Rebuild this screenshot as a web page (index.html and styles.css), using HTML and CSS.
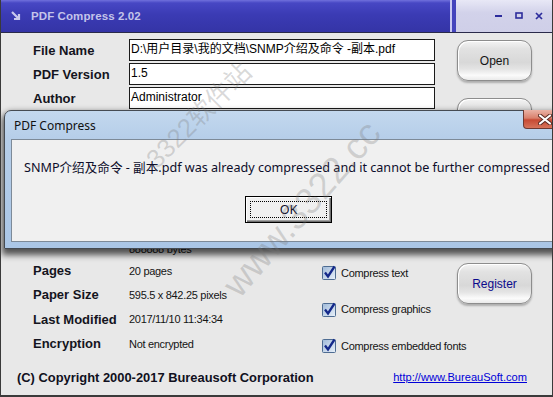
FILE: index.html
```html
<!DOCTYPE html>
<html>
<head>
<meta charset="utf-8">
<title>PDF Compress 2.02</title>
<link rel="stylesheet" href="styles.css">
</head>
<body>
<div class="window">
  <div class="titlebar">
    <div class="title-left">
      <svg class="app-icon" width="10" height="10" viewBox="0 0 10 10"><path d="M1 1 L8 8 M8 3 L8 8 L3 8" fill="none" stroke="#c8c8ec" stroke-width="2.2"/></svg>
      <span class="title-text">PDF Compress 2.02</span>
    </div>
    <div class="title-sep"></div>
    <div class="title-right">
      <svg width="8" height="8" viewBox="0 0 8 8"><rect x="0" y="3" width="7" height="2" fill="#2c2c9c"/></svg>
      <svg width="8" height="8" viewBox="0 0 8 8"><rect x="1" y="1" width="6" height="5" fill="none" stroke="#2c2c9c" stroke-width="1.6"/></svg>
      <svg width="8" height="8" viewBox="0 0 8 8"><path d="M1 1 L7 7 M7 1 L1 7" stroke="#2c2c9c" stroke-width="1.7"/></svg>
    </div>
  </div>
  <div class="client">
    <div class="top">
      <div class="fields">
        <div class="row"><span class="label">File Name</span><div class="field">D:\用户目录\我的文档\SNMP介绍及命令 -副本.pdf</div></div>
        <div class="row"><span class="label">PDF Version</span><div class="field">1.5</div></div>
        <div class="row"><span class="label">Author</span><div class="field">Administrator</div></div>
        <div class="row"><span class="label">Subject</span><div class="field"></div></div>
        <div class="row"><span class="label">Title</span><div class="field"></div></div>
        <div class="row"><span class="label">Keywords</span><div class="field"></div></div>
        <div class="row"><span class="label">Creator</span><div class="field"></div></div>
        <div class="row"><span class="label">Producer</span><div class="field"></div></div>
      </div>
      <div class="buttons">
        <div class="gbtn">Open</div>
        <div class="gbtn">Compress</div>
      </div>
    </div>
    <div class="bottom">
      <div class="info">
        <div class="irow size-row"><span class="label">File Size</span><span class="value">888888 bytes</span></div>
        <div class="irow"><span class="label">Pages</span><span class="value">20 pages</span></div>
        <div class="irow"><span class="label">Paper Size</span><span class="value">595.5 x 842.25 pixels</span></div>
        <div class="irow"><span class="label">Last Modified</span><span class="value">2017/11/10 11:34:34</span></div>
        <div class="irow"><span class="label">Encryption</span><span class="value">Not encrypted</span></div>
      </div>
      <div class="checks">
        <div class="check"><svg class="cb" width="15" height="15" viewBox="0 0 15 15"><defs><linearGradient id="cbg" x1="0" y1="0" x2="1" y2="1"><stop offset="0" stop-color="#9fb9d8"/><stop offset="1" stop-color="#e9f1fa"/></linearGradient></defs><rect x="0.5" y="1.5" width="13" height="13" rx="1" fill="url(#cbg)" stroke="#4e6c92"/><path d="M3 7.5 L6 11.5 L12.5 1.5" fill="none" stroke="#14288a" stroke-width="2.3"/></svg><span>Compress text</span></div>
        <div class="check"><svg class="cb" width="15" height="15" viewBox="0 0 15 15"><rect x="0.5" y="1.5" width="13" height="13" rx="1" fill="url(#cbg)" stroke="#4e6c92"/><path d="M3 7.5 L6 11.5 L12.5 1.5" fill="none" stroke="#14288a" stroke-width="2.3"/></svg><span>Compress graphics</span></div>
        <div class="check"><svg class="cb" width="15" height="15" viewBox="0 0 15 15"><rect x="0.5" y="1.5" width="13" height="13" rx="1" fill="url(#cbg)" stroke="#4e6c92"/><path d="M3 7.5 L6 11.5 L12.5 1.5" fill="none" stroke="#14288a" stroke-width="2.3"/></svg><span>Compress embedded fonts</span></div>
      </div>
      <div class="reg"><div class="gbtn register">Register</div></div>
    </div>
    <div class="footer">
      <span class="copyright">(C) Copyright 2000-2017 Bureausoft Corporation</span>
      <a class="link" href="#">http://www.BureauSoft.com</a>
    </div>
  </div>

  <div class="dialog">
    <div class="dlg-title">
      <span>PDF Compress</span>
      <div class="dlg-close"><svg width="14" height="11" viewBox="0 0 14 11"><path d="M2 1.5 L12 9.5 M12 1.5 L2 9.5" stroke="#5a2a22" stroke-width="4" stroke-linecap="round"/><path d="M2 1.5 L12 9.5 M12 1.5 L2 9.5" stroke="#ffffff" stroke-width="2.2" stroke-linecap="round"/></svg></div>
    </div>
    <div class="dlg-body">
      <p class="msg">SNMP介绍及命令 - 副本.pdf was already compressed and it cannot be further compressed</p>
      <div class="dlg-actions"><div class="okbtn"><span class="focus">OK</span></div></div>
    </div>
  </div>

  <div class="watermark wm1">www.3322.cc</div>
  <div class="watermark wm2">3322软件站</div>
</div>
</body>
</html>
```

FILE: styles.css
```css
* { box-sizing: border-box; }
html, body { margin: 0; padding: 0; }
body {
  width: 553px;
  height: 397px;
  overflow: hidden;
  background: #ffffff;
  font-family: "Liberation Sans", Arial, "Noto Sans CJK SC", sans-serif;
}
.window {
  position: relative;
  width: 553px;
  height: 397px;
  overflow: hidden;
  background: #e8e8e8;
  border-left: 1px solid #3a3a3a;
  border-right: 1px solid #3a3a3a;
  border-bottom: 2px solid #3a3a3a;
}
.titlebar {
  display: flex;
  height: 33px;
  border-bottom: 1px solid #2a2a4a;
}
.title-left {
  flex: 1;
  display: flex;
  align-items: center;
  gap: 10px;
  padding-left: 10px;
  background: linear-gradient(180deg, #7070dc 0px, #4747c4 3px, #3b3bb4 45%, #3434a6 100%);
}
.title-text {
  color: #c4c4ea;
  font-weight: bold;
  font-size: 11.5px;
  letter-spacing: 0.1px;
}
.title-sep {
  width: 6px;
  background: linear-gradient(90deg, #c8c8f2 0 2px, #4444bc 2px 6px);
}
.title-right {
  width: 96px;
  display: flex;
  align-items: center;
  justify-content: flex-end;
  gap: 12px;
  padding-right: 9px;
  background: linear-gradient(180deg, #e8e8f6 0%, #d2d2ea 40%, #cfcfe8 100%);
}
.client {
  padding: 6px 20px 0 32px;
}
.top {
  display: flex;
  align-items: flex-start;
}
.fields {
  display: flex;
  flex-direction: column;
  gap: 2px;
}
.row {
  display: flex;
  align-items: center;
  height: 22px;
}
.label {
  width: 96px;
  flex: none;
  font-weight: bold;
  font-size: 13px;
  color: #141420;
}
.field {
  width: 306px;
  height: 22px;
  background: #ffffff;
  border: 1px solid #1a1a1a;
  font-size: 12px;
  line-height: 19px;
  padding-left: 1px;
  color: #000;
  white-space: nowrap;
  font-family: "Liberation Sans", Arial, "Noto Sans CJK SC", sans-serif;
}
.buttons {
  margin-left: 22px;
  display: flex;
  flex-direction: column;
  gap: 17px;
  padding-top: 1px;
}
.gbtn {
  width: 75px;
  height: 41px;
  border-radius: 11px;
  border: 1px solid #8d8d8d;
  background: linear-gradient(180deg, #f4f4f4 0%, #e2e2e2 20%, #d8d8d8 55%, #e4e4e4 72%, #fbfbfb 88%, #eaeaea 100%);
  box-shadow: inset 1px 1px 0 #ffffff, 0 2px 2px rgba(0,0,0,0.25);
  display: flex;
  align-items: center;
  justify-content: center;
  font-size: 12px;
  color: #151515;
}
.register { color: #0a0a8c; }
.bottom {
  display: flex;
  align-items: flex-start;
  margin-top: 5px;
}
.info {
  width: 289px;
  flex: none;
  display: flex;
  flex-direction: column;
}
.irow {
  display: flex;
  align-items: center;
  height: 24.4px;
}
.size-row .label { align-self: flex-start; }
.size-row .value { align-self: flex-end; margin-bottom: 3px; }
.value {
  font-size: 11px;
  color: #141414;
  letter-spacing: -0.3px;
}
.checks {
  width: 135px;
  flex: none;
  display: flex;
  flex-direction: column;
  gap: 21.5px;
  padding-top: 31px;
}
.check {
  display: flex;
  align-items: center;
  gap: 4px;
  height: 15px;
  font-size: 11px;
  letter-spacing: -0.3px;
  color: #141414;
  white-space: nowrap;
}
.cb { flex: none; }
.reg {
  padding-top: 29px;
}
.footer {
  display: flex;
  justify-content: space-between;
  align-items: center;
  margin-left: -16px;
  margin-right: 5px;
  margin-top: 14px;
}
.copyright {
  font-weight: bold;
  font-size: 12.9px;
  color: #101020;
}
.link {
  font-size: 11.1px;
  color: #0000d8;
  text-decoration: underline;
}
/* message dialog overlay */
.dialog {
  position: absolute;
  left: 3px;
  top: 110px;
  width: 570px;
  height: 139px;
  border: 1px solid #454b52;
  border-radius: 7px 7px 0 0;
  background: linear-gradient(180deg, #c3d8ee 0%, #b6cee9 20%, #aac6e6 100%);
  box-shadow: 0 4px 6px 2px rgba(0,0,0,0.65);
  padding: 0 6px 6px 6px;
  display: flex;
  flex-direction: column;
}
.dlg-title {
  height: 28px;
  display: flex;
  align-items: center;
  padding-left: 3px;
  font-family: "Noto Sans", "Open Sans", sans-serif;
  font-size: 12px;
  color: #111;
  position: relative;
}
.dlg-close {
  position: absolute;
  left: 512px;
  top: -1px;
  width: 44px;
  height: 19px;
  border: 1px solid #6e3a32;
  border-top: none;
  border-radius: 0 0 4px 4px;
  background: linear-gradient(180deg, #eab3a6 0%, #d9806c 45%, #c74a33 55%, #d6735a 100%);
  display: flex;
  align-items: center;
  padding-left: 14px;
}
.dlg-body {
  flex: 1;
  background: #f0f0f0;
  border: 1px solid #7d8a98;
  padding: 17px 0 0 12px;
}
.msg {
  margin: 0;
  font-family: "Noto Sans", "Open Sans", "Noto Sans CJK SC", sans-serif;
  font-size: 12.6px;
  color: #0d0d2a;
  white-space: nowrap;
}
.dlg-actions {
  margin-top: 20px;
  padding-left: 221px;
}
.okbtn {
  width: 87px;
  height: 27px;
  border: 1px solid #000;
  box-shadow: inset 1px 1px 0 #ffffff, inset -1px -1px 0 #6f6f6f, inset -2px -2px 0 #a0a0a0;
  background: #f0f0f0;
  padding: 4px;
}
.focus {
  display: flex;
  align-items: center;
  justify-content: center;
  height: 100%;
  border: 1px dotted #000;
  font-family: "Noto Sans", "Open Sans", sans-serif;
  font-size: 12.6px;
  color: #0d0d2a;
}
.watermark {
  position: absolute;
  white-space: nowrap;
  color: rgba(120, 120, 120, 0.28);
  font-family: "Liberation Sans", Arial, "Noto Sans CJK SC", sans-serif;
  pointer-events: none;
}
.wm1 {
  left: 192px;
  top: 188px;
  font-size: 37px;
  transform: rotate(-49deg);
}
.wm2 {
  left: 128px;
  top: 95px;
  font-size: 26px;
  transform: rotate(-45deg);
}
```
